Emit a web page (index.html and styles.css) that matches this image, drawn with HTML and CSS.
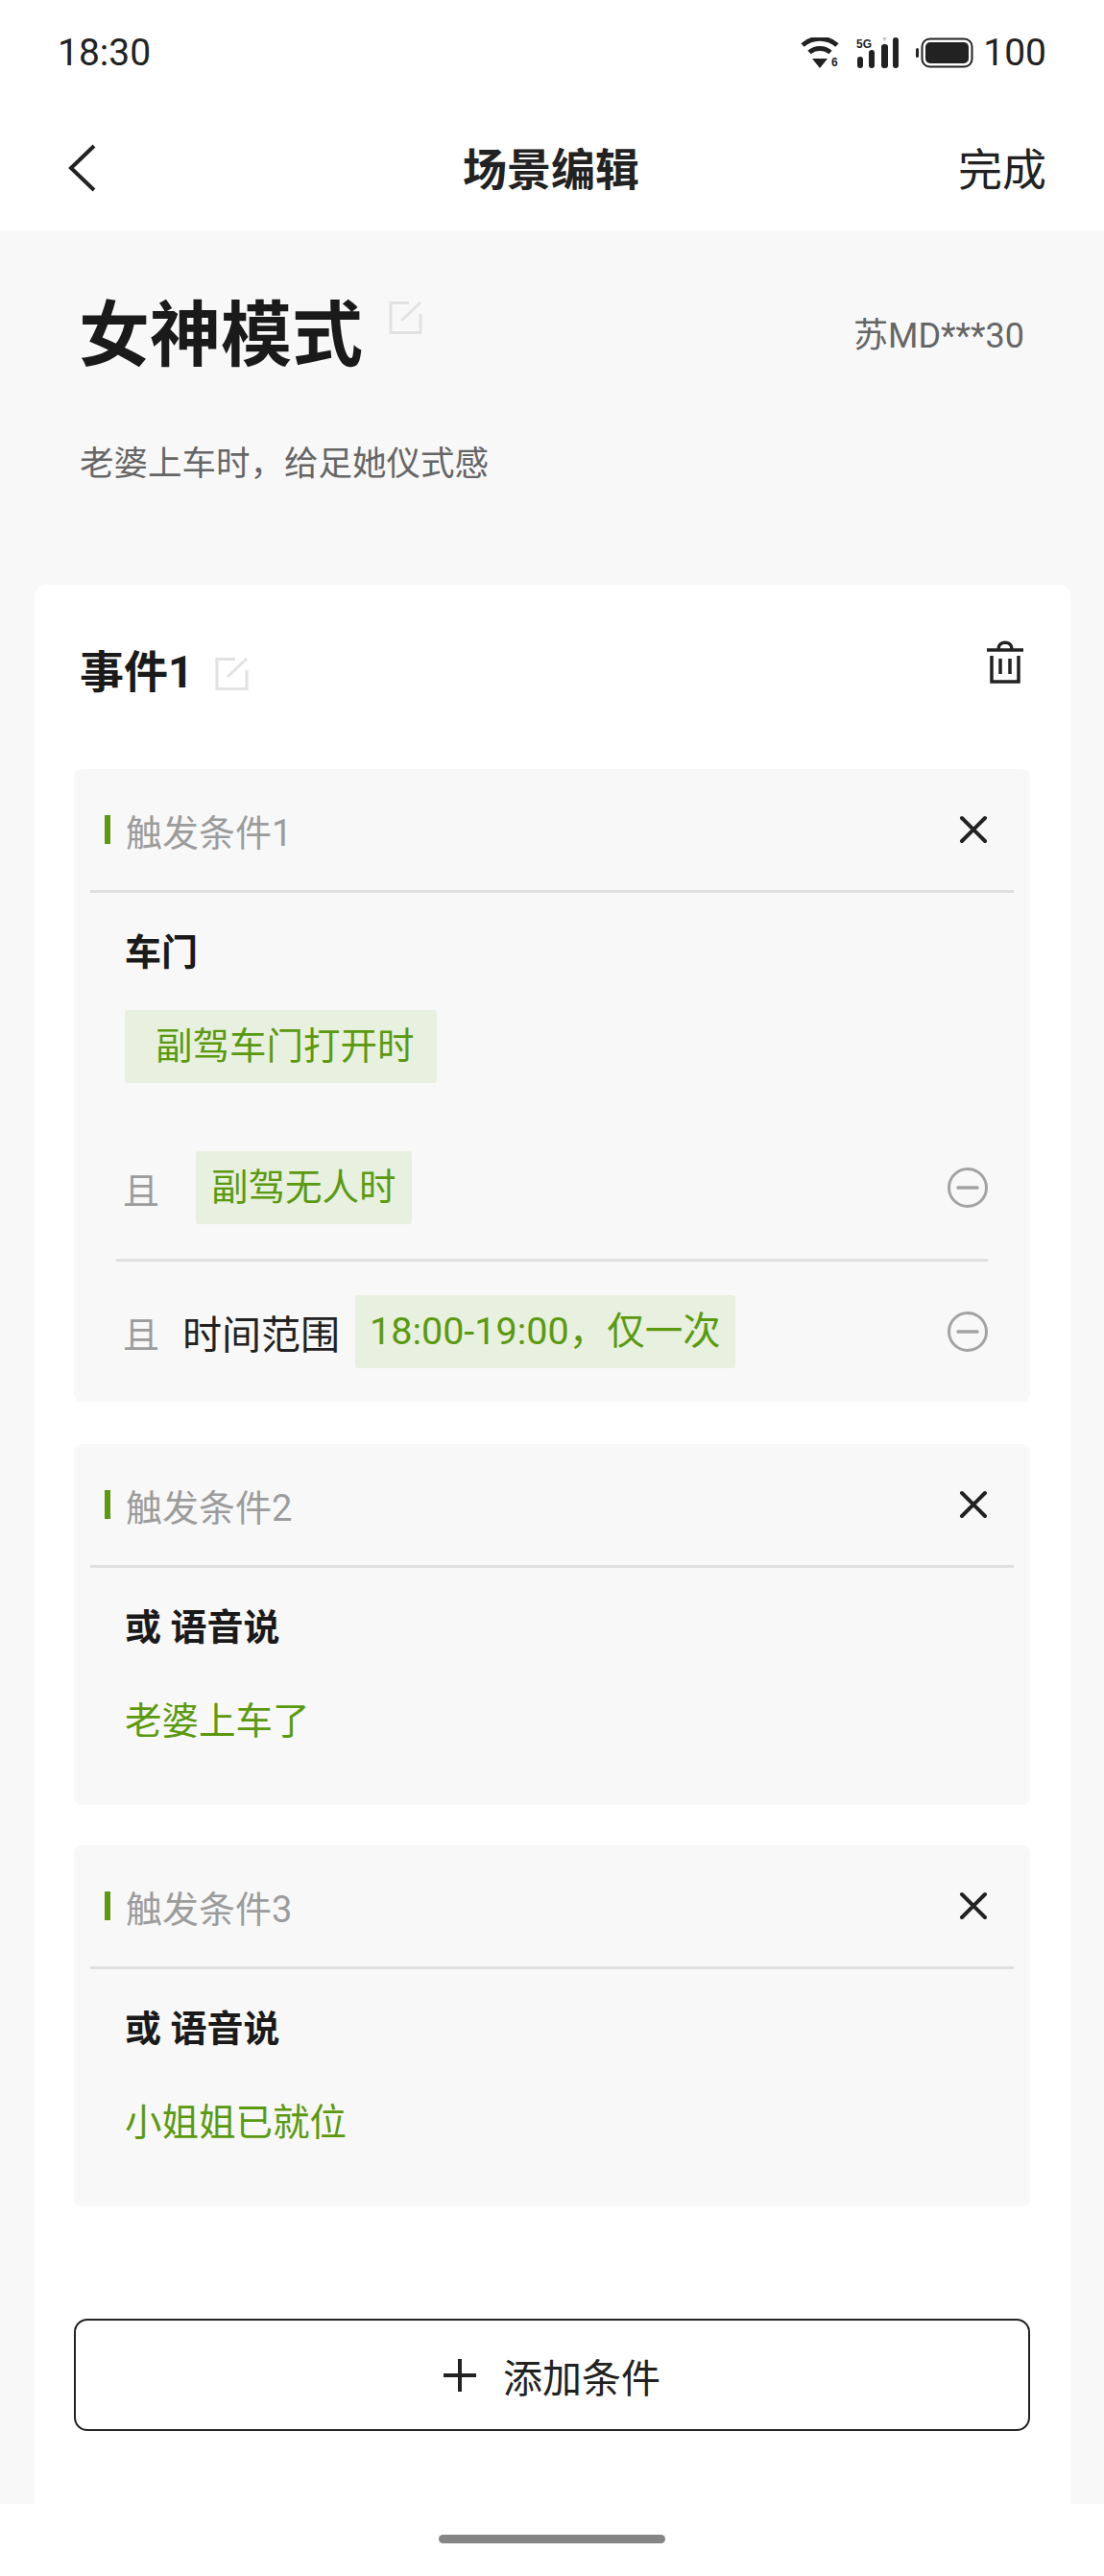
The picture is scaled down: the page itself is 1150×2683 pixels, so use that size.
FILE: index.html
```html
<!DOCTYPE html>
<html>
  <head>
    <meta charset="utf-8">
    <title>场景编辑</title>
    <link rel="stylesheet" href="styles.css">
  </head>
  <body>
    <svg class="defs">
      <symbol id="edit" viewBox="0 0 36 36">
        <path d="M21 3.5H2v31h31V15" fill="none" stroke="#e2e2e2" stroke-width="3"/>
        <path d="M13 22L33 3" fill="none" stroke="#e2e2e2" stroke-width="3"/>
      </symbol>
      <symbol id="close" viewBox="0 0 32 32">
        <path d="M4 4l24 24M28 4L4 28" fill="none" stroke="#222" stroke-width="4" stroke-linecap="round"/>
      </symbol>
      <symbol id="minus" viewBox="0 0 44 44">
        <circle cx="22" cy="22" r="19.5" fill="none" stroke="#a3a3a3" stroke-width="3"/>
        <path d="M12 22h20" fill="none" stroke="#a3a3a3" stroke-width="3.5" stroke-linecap="round"/>
      </symbol>
    </svg>

    <!-- Status bar -->
    <div class="status">
      <span class="status-time">18:30</span>
      <div class="status-icons">
        <svg width="40" height="32" viewBox="0 0 40 32">
          <path d="M2 8C12-1 28-1 38 8" fill="none" stroke="#222" stroke-width="5"/>
          <path d="M9 15.500C15 10 25 10 31 15.500" fill="none" stroke="#222" stroke-width="5"/>
          <path d="M12 22h16l-8 10z" fill="#222"/>
          <text class="tiny" x="32" y="30">6</text>
        </svg>
        <svg width="44" height="32" viewBox="0 0 44 32">
          <text class="tiny" x="0" y="11">5G</text>
          <path d="M27 0h5l-2.500 4z" fill="#c4c4c4"/>
          <rect x="1" y="20" width="6" height="12" rx="3" fill="#222"/>
          <rect x="13" y="13" width="6" height="19" rx="3" fill="#222"/>
          <rect x="26" y="7" width="7" height="25" rx="3" fill="#222"/>
          <rect x="38" y="0" width="6" height="32" rx="3" fill="#222"/>
        </svg>
        <svg width="60" height="32" viewBox="0 0 60 32">
          <rect x="0" y="11" width="3" height="10" rx="1.500" fill="#222"/>
          <rect x="6.500" y="1.500" width="52" height="29" rx="8" fill="none" stroke="#222" stroke-width="2"/>
          <rect x="10" y="5" width="45" height="22" rx="5" fill="#222"/>
        </svg>
        <span class="status-batt">100</span>
      </div>
    </div>

    <!-- Nav bar -->
    <div class="nav">
      <svg class="nav-back" width="30" height="50" viewBox="0 0 30 50">
        <path d="M27 2L3 25l24 23" fill="none" stroke="#222" stroke-width="4"/>
      </svg>
      <h1 class="nav-title">场景编辑</h1>
      <span class="nav-done">完成</span>
    </div>

    <div class="main">
      <div class="hero">
        <div class="hero-row">
          <h2 class="hero-title">女神模式</h2>
          <svg class="hero-edit" width="36" height="36"><use href="#edit"/></svg>
          <span class="hero-owner">苏MD***30</span>
        </div>
        <p class="hero-desc">老婆上车时，给足她仪式感</p>
      </div>

      <div class="card">
        <div class="card-head">
          <h3 class="card-title">事件1</h3>
          <svg class="card-edit" width="36" height="36"><use href="#edit"/></svg>
          <svg class="card-trash" width="40" height="46" viewBox="0 0 40 46">
            <path d="M1 10h38" fill="none" stroke="#222" stroke-width="3.500"/>
            <path d="M13 9c0-9 14-9 14 0" fill="none" stroke="#222" stroke-width="3.500"/>
            <path d="M6 16v27h28V16" fill="none" stroke="#222" stroke-width="3.500"/>
            <path d="M15 19v16M25 19v16" fill="none" stroke="#222" stroke-width="3.500"/>
          </svg>
        </div>

        <!-- Trigger 1 -->
        <div class="box">
          <div class="box-head">
            <span class="box-mark"></span>
            <span class="box-title">触发条件1</span>
            <svg class="box-close" width="32" height="32"><use href="#close"/></svg>
          </div>
          <div class="box-main">
            <div class="label">车门</div>
            <span class="chip chip-wide">副驾车门打开时</span>
          </div>
          <div class="row row-first">
            <span class="row-and">且</span>
            <span class="chip chip-far">副驾无人时</span>
            <svg class="row-minus" width="44" height="44"><use href="#minus"/></svg>
          </div>
          <div class="row row-last">
            <span class="row-and">且</span>
            <span class="row-name">时间范围</span>
            <span class="chip chip-time">18:00-19:00，仅一次</span>
            <svg class="row-minus" width="44" height="44"><use href="#minus"/></svg>
          </div>
        </div>

        <!-- Trigger 2 -->
        <div class="box box-tight">
          <div class="box-head">
            <span class="box-mark"></span>
            <span class="box-title">触发条件2</span>
            <svg class="box-close" width="32" height="32"><use href="#close"/></svg>
          </div>
          <div class="box-voice">
            <div class="label">或 语音说</div>
            <div class="voice-text">老婆上车了</div>
          </div>
        </div>

        <!-- Trigger 3 -->
        <div class="box">
          <div class="box-head">
            <span class="box-mark"></span>
            <span class="box-title">触发条件3</span>
            <svg class="box-close" width="32" height="32"><use href="#close"/></svg>
          </div>
          <div class="box-voice">
            <div class="label">或 语音说</div>
            <div class="voice-text">小姐姐已就位</div>
          </div>
        </div>

        <div class="add-btn">
          <svg width="34" height="34" viewBox="0 0 34 34">
            <path d="M0 17h34M17 0v34" fill="none" stroke="#222" stroke-width="4"/>
          </svg>
          <span>添加条件</span>
        </div>
      </div>
    </div>

    <!-- Home indicator -->
    <div class="home">
      <span class="home-bar"></span>
    </div>
  </body>
</html>
```

FILE: styles.css
```css
* {
  box-sizing: border-box;
}
body {
  margin: 0;
  width: 1150px;
  background-color: white;
  color: #222;
  font-family: Roboto, "Noto Sans CJK SC", sans-serif;
}
h1,
h2,
h3,
p {
  margin: 0;
}
svg {
  display: block;
  flex: none;
}
.defs {
  display: none;
}
.tiny {
  font-family: "Liberation Sans", sans-serif;
  font-size: 12px;
  font-weight: bold;
  fill: #222;
}

/* top bars */
.status {
  height: 110px;
  padding: 0 60px;
  display: flex;
  align-items: center;
  justify-content: space-between;
  font-size: 39px;
}
.status-icons {
  display: flex;
  align-items: center;
  gap: 18px;
}
.status-batt {
  margin-left: -8px;
}
.nav {
  height: 130px;
  padding: 0 60px 5px 71px;
  display: flex;
  align-items: center;
  justify-content: space-between;
}
.nav-back {
  margin-top: 5px;
}
.nav-title {
  font-size: 46px;
  font-weight: bold;
  margin-left: 49px;
}
.nav-done {
  font-size: 46px;
}

/* title area */
.main {
  background-color: #f8f8f8;
  padding-top: 60px;
}
.hero {
  padding: 0 83px 0 84px;
  height: 309px;
}
.hero-row {
  display: flex;
  align-items: center;
  height: 100px;
}
.hero-title {
  margin-left: -2px;
  font-size: 74px;
  line-height: 100px;
  font-weight: bold;
  color: #1a1a1a;
}
.hero-edit {
  margin: -40px 0 0 27px;
}
.hero-owner {
  margin: -8px 0 0 auto;
  font-size: 36px;
  color: #666;
}
.hero-desc {
  margin: 58px 0 0 -1px;
  font-size: 35.5px;
  line-height: 50px;
  color: #666;
}

/* event card */
.card {
  margin: 0 35px 0 36px;
  padding: 0 42px 76px 41px;
  background-color: white;
  border-radius: 12px 12px 0 0;
}
.card-head {
  height: 192px;
  padding: 56px 6px 0 6px;
  display: flex;
  align-items: flex-start;
}
.card-title {
  margin-top: 5px;
  font-size: 46px;
  line-height: 60px;
  font-weight: bold;
  color: #1a1a1a;
}
.card-edit {
  margin: 18px 0 0 23px;
}
.card-trash {
  margin: 2px 0 0 auto;
}

/* trigger boxes */
.box {
  margin-bottom: 44px;
  background-color: #f8f8f8;
  border-radius: 8px;
}
.box-tight {
  margin-bottom: 42px;
}
.box-head {
  height: 129px;
  margin: 0 17px;
  padding: 0 26px 0 15px;
  display: flex;
  align-items: center;
  border-bottom: 3px solid #e0e0e0;
}
.box-mark {
  width: 6px;
  height: 30px;
  margin-right: 16px;
  background-color: #5b9a0f;
}
.box-title {
  font-size: 38px;
  color: #9c9c9c;
}
.box-close {
  margin-left: auto;
}
.box-main {
  padding: 37px 53px 0;
}
.box-voice {
  padding: 37px 53px 62px;
}
.label {
  font-size: 38px;
  line-height: 50px;
  font-weight: bold;
  color: #1a1a1a;
}
.voice-text {
  margin-top: 48px;
  font-size: 38.5px;
  line-height: 50px;
  color: #5b9a0f;
}
.chip {
  display: inline-block;
  height: 76px;
  padding: 0 16px;
  font-size: 38.5px;
  line-height: 76px;
  color: #5b9a0f;
  background-color: #e8f0e0;
  border-radius: 3px;
}
.chip-wide {
  margin-top: 35px;
  padding: 0 23px 0 32px;
}
.chip-far {
  margin-left: 38px;
}
.chip-time {
  padding: 0 15px;
  font-size: 39.5px;
}

/* and-rows */
.row {
  margin: 0 44px;
  padding-left: 7px;
  display: flex;
  align-items: center;
}
.row-first {
  margin-top: 71px;
  padding-bottom: 36px;
  border-bottom: 3px solid #e0e0e0;
}
.row-last {
  padding-top: 35px;
  padding-bottom: 35px;
}
.row-and {
  width: 38px;
  font-size: 38px;
  color: #9c9c9c;
}
.row-name {
  margin: 0 16px 0 24px;
  font-size: 41px;
  color: #222;
}
.row-minus {
  margin-left: auto;
  margin-right: -1px;
}

/* bottom */
.add-btn {
  height: 117px;
  margin-top: 117px;
  display: flex;
  align-items: center;
  justify-content: center;
  gap: 28px;
  border: 2px solid #222;
  border-radius: 14px;
  font-size: 41px;
  color: #222;
}
.home {
  height: 74px;
  padding-top: 32px;
  display: flex;
  justify-content: center;
}
.home-bar {
  width: 236px;
  height: 9px;
  background-color: #858585;
  border-radius: 5px;
}
```
